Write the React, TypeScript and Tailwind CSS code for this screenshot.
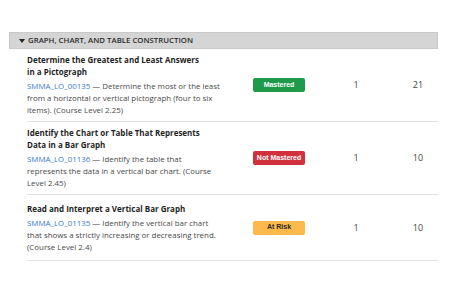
const rows = [
  {
    title: "Determine the Greatest and Least Answers in a Pictograph",
    code: "SMMA_LO_00135",
    desc: "Determine the most or the least from a horizontal or vertical pictograph (four to six items). (Course Level 2.25)",
    descW: "w-[200px]",
    status: "Mastered",
    a: "1",
    b: "21",
  },
  {
    title: "Identify the Chart or Table That Represents Data in a Bar Graph",
    code: "SMMA_LO_01136",
    desc: "Identify the table that represents the data in a vertical bar chart. (Course Level 2.45)",
    descW: "w-[186px]",
    status: "Not Mastered",
    a: "1",
    b: "10",
  },
  {
    title: "Read and Interpret a Vertical Bar Graph",
    code: "SMMA_LO_01135",
    desc: "Identify the vertical bar chart that shows a strictly increasing or decreasing trend. (Course Level 2.4)",
    descW: "w-[190px]",
    status: "At Risk",
    a: "1",
    b: "10",
  },
];

const BADGE: Record<string, string> = {
  Mastered: "bg-[#1e9a4a] text-white",
  "Not Mastered": "bg-[#d3303d] text-white",
  "At Risk": "bg-[#fdb94b] text-[#2a2a2a]",
};

function StatusBadge({ status }: { status: string }) {
  return (
    <span
      className={`flex h-[14px] w-[52px] items-center justify-center rounded-[2px] text-[7px] font-bold ${BADGE[status]}`}
      style={{ fontFamily: '"Liberation Sans", Arial, sans-serif' }}
    >
      {status}
    </span>
  );
}

export default function App() {
  return (
    <div
      className="h-[285px] w-[449px] bg-white pt-[32px] text-[#333]"
      style={{ fontFamily: '"Open Sans", "Noto Sans", sans-serif' }}
    >
      <div className="ml-[9px] flex h-[17px] w-[429px] items-center border border-[#c9c9c9] bg-[#d5d5d5] pl-[9px]">
        <svg width="6" height="4" viewBox="0 0 6 4" className="mr-[3px]">
          <path d="M0 0 H6 L3 4 Z" fill="#222" />
        </svg>
        <span className="text-[7.8px] font-semibold text-[#2b2b2b]">
          GRAPH, CHART, AND TABLE CONSTRUCTION
        </span>
      </div>
      <div className="ml-[27px] w-[411px]">
        {rows.map((r) => (
          <div
            key={r.code}
            className="flex min-h-[66px] items-center border-b border-[#e2e2e2] pt-[5px] pb-[5px]"
          >
            <div className="w-[200px] shrink-0">
              <div className="w-[180px] text-[8px] font-bold leading-[12px] text-[#1f1f1f]">
                {r.title}
              </div>
              <div className={`mt-[2px] text-[7.9px] leading-[12px] text-[#4a4a4a] ${r.descW}`}>
                <span className="text-[#3a7bd5]">{r.code}</span> — {r.desc}
              </div>
            </div>
            <div className="flex w-[104px] justify-center">
              <StatusBadge status={r.status} />
            </div>
            <div className="w-[46px] pl-[4px] text-center text-[9px] text-[#444]">{r.a}</div>
            <div className="w-[61px] pl-[21px] text-center text-[9px] text-[#444]">
              {r.b}
            </div>
          </div>
        ))}
      </div>
    </div>
  );
}
